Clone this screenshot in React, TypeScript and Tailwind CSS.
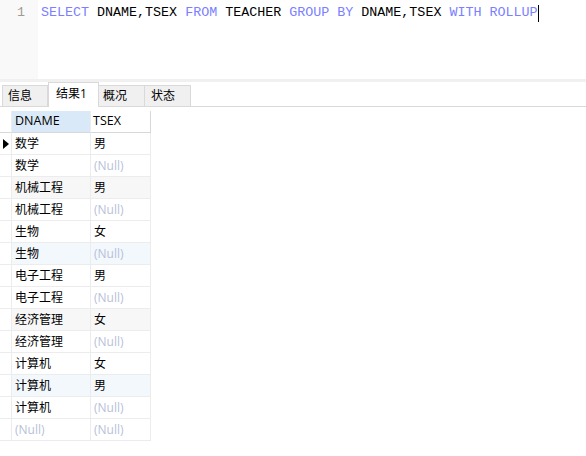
import React from "react";

const rows: [string, string][] = [
  ["数学", "男"],
  ["数学", ""],
  ["机械工程", "男"],
  ["机械工程", ""],
  ["生物", "女"],
  ["生物", ""],
  ["电子工程", "男"],
  ["电子工程", ""],
  ["经济管理", "女"],
  ["经济管理", ""],
  ["计算机", "女"],
  ["计算机", "男"],
  ["计算机", ""],
  ["", ""],
];

const rowBg = (i: number) =>
  i === 2 || i === 8 ? "bg-[#f7f7f7]" : i === 5 || i === 11 ? "bg-[#f3f8fd]" : "bg-white";

function Cell({ v, cls }: { v: string; cls: string }) {
  return (
    <div className={`h-[22px] flex items-center border-r border-b border-[#ececec] pl-[3px] ${cls}`}>
      {v ? <span className="text-black">{v}</span> : <span className="text-[#b7bfd8]">(Null)</span>}
    </div>
  );
}

export default function App() {
  const kw = "text-[#7a80ff]";
  return (
    <div
      className="w-[586px] h-[456px] bg-white overflow-hidden"
      style={{ fontFamily: '"Open Sans", "Noto Sans CJK SC", sans-serif' }}
    >
      {/* editor */}
      <div className="h-[79px] flex">
        <div className="w-[38px] bg-[#f9f9f9] pl-[17px] pt-[4px] leading-[18px] text-[13.35px] text-[#a09a90]" style={{ fontFamily: '"Liberation Mono", monospace' }}>
          1
        </div>
        <div className="pl-[3px] pt-[4px] leading-[18px] text-[13.35px] text-black whitespace-pre flex items-start" style={{ fontFamily: '"Liberation Mono", monospace' }}>
          <span>
            <span className={kw}>SELECT</span> DNAME,TSEX <span className={kw}>FROM</span> TEACHER{" "}
            <span className={kw}>GROUP BY</span> DNAME,TSEX <span className={kw}>WITH ROLLUP</span>
          </span>
          <span className="w-[1px] h-[17px] bg-black mt-[1px]" />
        </div>
      </div>
      <div className="h-[3px] bg-[#f0f0f0]" />
      {/* tabs */}
      <div className="h-[25px] border-b border-[#d9d9d9] flex items-end pl-[2px] text-[12px] text-black">
        <div className="w-[46px] h-[21px] bg-[#f0f0f0] border border-b-0 border-[#d9d9d9] pl-[5px] leading-[20px]">信息</div>
        <div className="w-[51px] h-[25px] bg-white border border-b-0 border-[#d9d9d9] mb-[-1px] pl-[7px] pt-[2px] leading-[18px]">结果1</div>
        <div className="w-[46px] h-[21px] bg-[#f0f0f0] border border-b-0 border-l-0 border-[#d9d9d9] pl-[4px] leading-[20px]">概况</div>
        <div className="w-[46px] h-[21px] bg-[#f0f0f0] border border-b-0 border-l-0 border-[#d9d9d9] pl-[6px] leading-[20px]">状态</div>
      </div>
      {/* grid */}
      <div className="mt-[4px] grid grid-cols-[12px_79px_60px] text-[12px]">
        <div className="h-[22px] border-r border-b border-[#ececec] border-b-[#d8d8d8] bg-white" />
        <div className="h-[22px] flex items-center border-r border-b border-[#ececec] border-b-[#d8d8d8] bg-[#d9e9f7] pl-[3px] text-black text-[12.5px]">DNAME</div>
        <div className="h-[22px] flex items-center border-r border-b border-[#d8d8d8] bg-white pl-[2px] text-black text-[12.5px]">TSEX</div>
        {rows.map(([d, t], i) => (
          <React.Fragment key={i}>
            <div className="h-[22px] flex items-center border-r border-b border-[#ececec] bg-white pl-[3px]">
              {i === 0 && (
                <svg width="6" height="10" viewBox="0 0 6 10">
                  <path d="M0 0 L6 5 L0 10 Z" fill="#000" />
                </svg>
              )}
            </div>
            <Cell v={d} cls={rowBg(i)} />
            <Cell v={t} cls={`${rowBg(i)} pl-[2px]`} />
          </React.Fragment>
        ))}
      </div>
    </div>
  );
}
